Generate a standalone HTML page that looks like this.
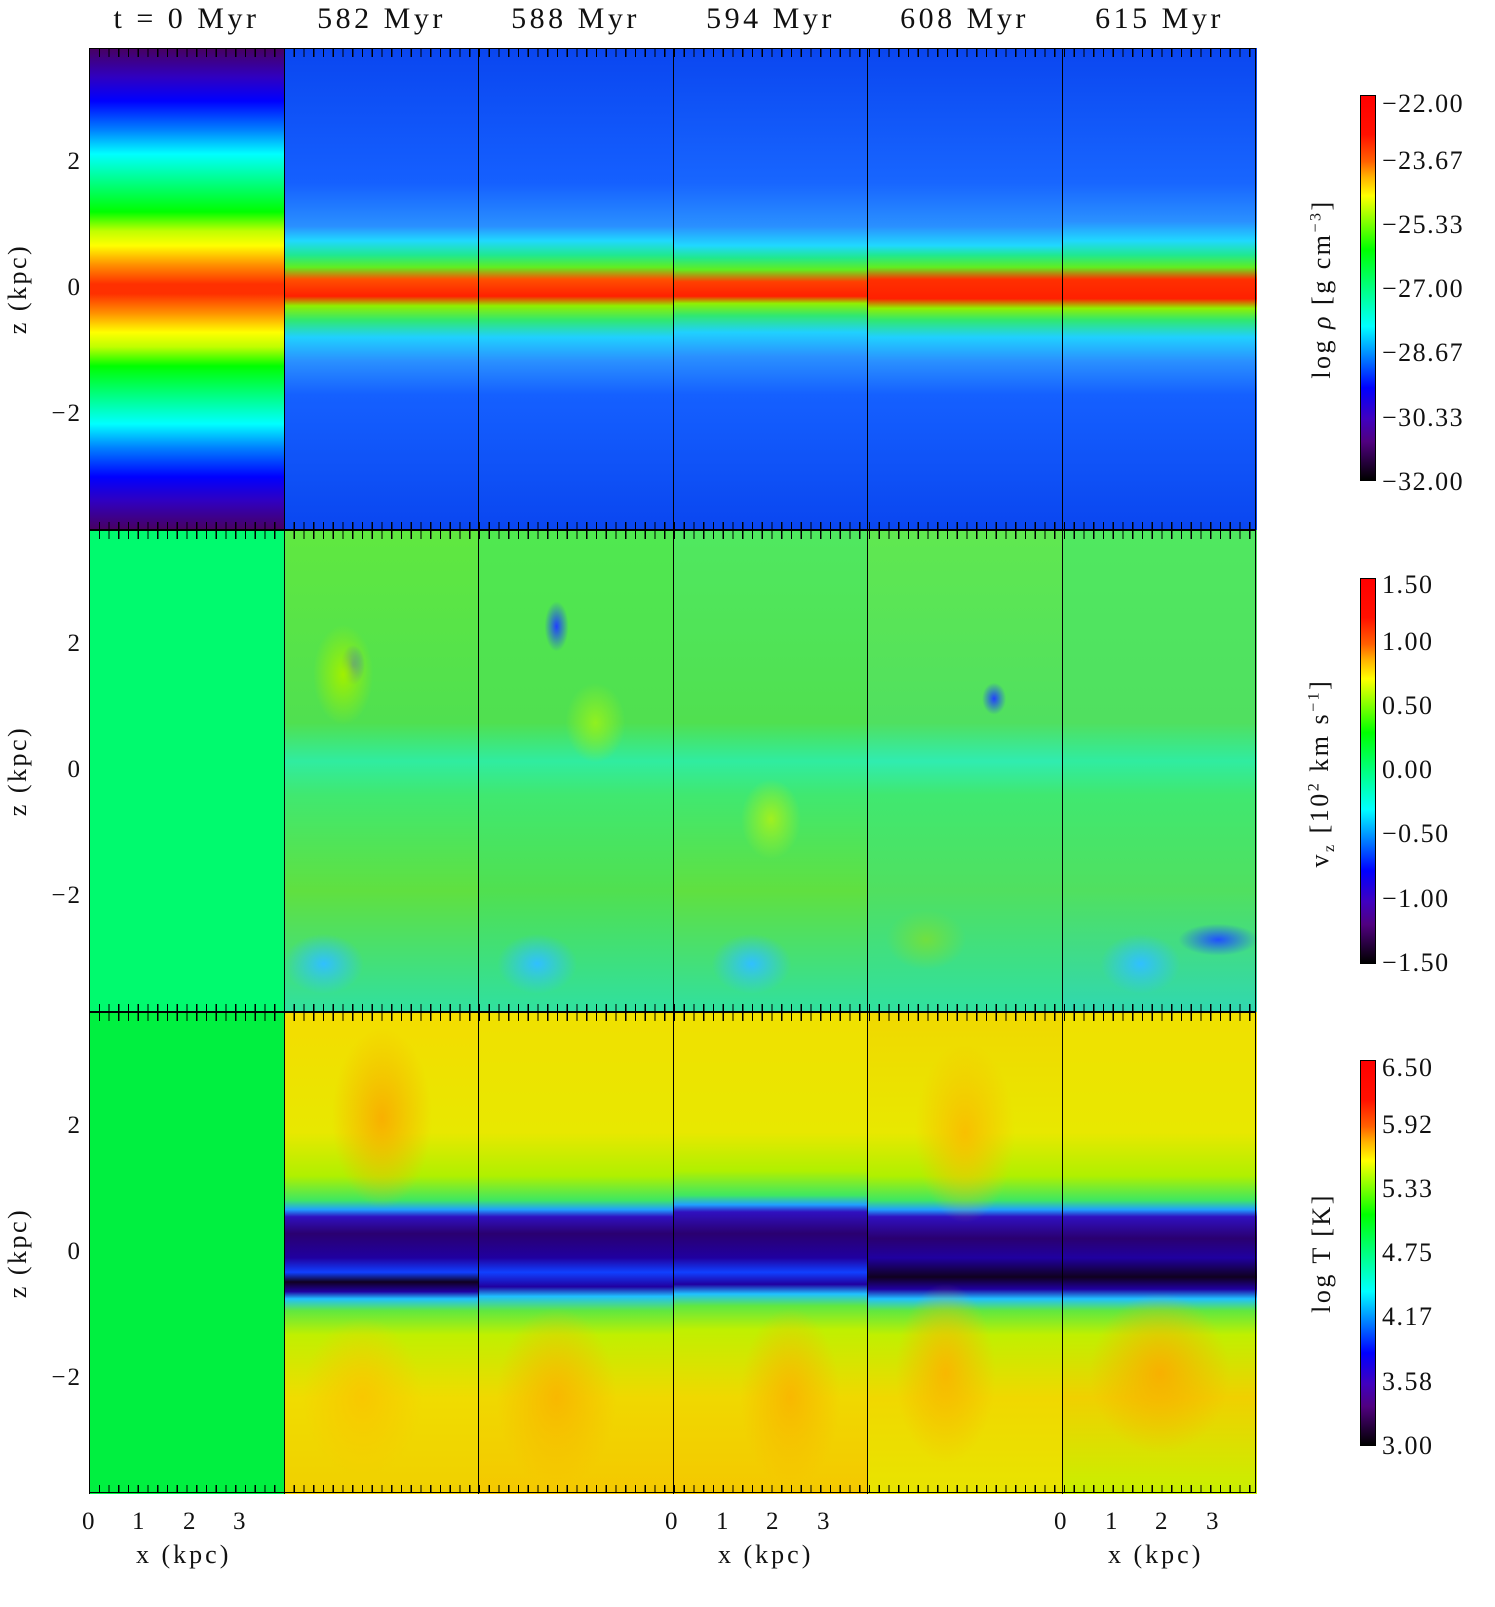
<!DOCTYPE html>
<html><head><meta charset="utf-8"><style>
*{margin:0;padding:0;box-sizing:border-box}
body{width:1495px;height:1607px;background:#fff;position:relative;overflow:hidden;font-family:"Liberation Serif",serif;color:#111}
.p{position:absolute;width:195px;height:482px;border-left:1.5px solid #000}
.t{position:absolute;font-size:30px;top:2px;width:195px;text-align:center;letter-spacing:3.5px;white-space:pre}
.yl{position:absolute;font-size:25px;width:40px;text-align:right;left:42px;letter-spacing:2px}
.cl{position:absolute;font-size:26px;left:1382px;white-space:pre;letter-spacing:1.5px}
.rot{position:absolute;font-size:26px;transform:rotate(-90deg);transform-origin:center;white-space:nowrap;text-align:center;width:320px;letter-spacing:2.5px}
.cb{position:absolute;left:1360px;width:16px;height:386px;border:1.5px solid #000;background:linear-gradient(to bottom,#ff0000 0%,#ff1000 10%,#ff6000 17%,#ffb000 21%,#ffff00 26%,#80ff00 33%,#00ff00 40%,#00ff80 50%,#00ffff 60%,#0080ff 68%,#0000ff 76%,#4000c0 84%,#500080 90%,#000 100%)}
.ticks{position:absolute;left:89px;width:1167px;height:8px;background:repeating-linear-gradient(to right,#000 0 1.2px,transparent 1.2px 9.75px)}
.bx{position:absolute;left:89px;top:48px;width:1167px;height:1445px;border:1.5px solid #000}
.hl{position:absolute;left:89px;width:1167px;height:1.5px;background:#000}
.xl{position:absolute;font-size:25px;top:1508px}
.xt{position:absolute;font-size:26px;top:1540px;letter-spacing:3px}
</style></head><body>

<div class="t" style="left:89px">t = 0 Myr</div>
<div class="t" style="left:284px">582 Myr</div>
<div class="t" style="left:478px">588 Myr</div>
<div class="t" style="left:673px">594 Myr</div>
<div class="t" style="left:867px">608 Myr</div>
<div class="t" style="left:1062px">615 Myr</div>

<!-- row 1 -->
<div class="p" style="left:89px;top:48px;background:linear-gradient(to bottom,#480060 0%,#3000c0 6%,#0000ff 11%,#0080ff 17%,#00ffff 22%,#00ff80 28%,#00ff00 34%,#c0ff00 38%,#ffff00 41%,#ff9000 45%,#ff3000 49%,#ff3000 51%,#ff9000 55%,#ffff00 59%,#c0ff00 62%,#00ff00 66%,#00ff80 72%,#00ffff 78%,#0080ff 83%,#0000ff 89%,#3000c0 94%,#480060 100%)"></div>
<div class="p" style="left:284px;top:48px;background:linear-gradient(to bottom,#0a46f0 0%,#1560ff 28%,#2a90ff 37%,#20d8ff 40%,#20e890 43%,#60ee20 45.5%,#ff5000 48%,#ff2000 51.5%,#90f000 53.5%,#30e870 56.5%,#20d0ff 60%,#2a90ff 65%,#1560ff 72%,#0a46f0 100%)"></div>
<div class="p" style="left:478px;top:48px;background:linear-gradient(to bottom,#0a46f0 0%,#1560ff 28%,#2a90ff 37%,#20d8ff 40%,#20e890 43%,#60ee20 45.5%,#ff5000 48%,#ff2000 51.5%,#90f000 53.5%,#30e870 56.5%,#20d0ff 60%,#2a90ff 65%,#1560ff 72%,#0a46f0 100%)"></div>
<div class="p" style="left:673px;top:48px;background:linear-gradient(to bottom,#0a46f0 0%,#1866ff 28%,#2a90ff 37%,#20d8ff 41%,#20e890 43.5%,#60ee20 46%,#ff4000 48.5%,#ff2000 51.5%,#90f000 53%,#30e870 55.5%,#20d0ff 59%,#2a90ff 64%,#1560ff 72%,#0a46f0 100%)"></div>
<div class="p" style="left:867px;top:48px;background:linear-gradient(to bottom,#0a46f0 0%,#1866ff 28%,#2a90ff 37%,#20d8ff 41%,#20e890 43%,#60ee20 45.5%,#ff3000 48%,#ff2000 52%,#90f000 54%,#30e870 56.5%,#20d0ff 60%,#2a90ff 65%,#1560ff 72%,#0a46f0 100%)"></div>
<div class="p" style="left:1062px;top:48px;background:linear-gradient(to bottom,#0a46f0 0%,#1866ff 28%,#2a90ff 36%,#20d8ff 40%,#20e890 43%,#60ee20 45.5%,#ff3000 48%,#ff2000 52%,#90f000 54%,#30e870 56.5%,#20d0ff 60%,#2a90ff 65%,#1560ff 72%,#0a46f0 100%)"></div>

<!-- row 2 -->
<div class="p" style="left:89px;top:530px;background:#00fa6e"></div>
<div class="p" style="left:284px;top:530px;background:radial-gradient(ellipse 30px 50px at 30% 30%,#a0f000,transparent),radial-gradient(ellipse 12px 20px at 35% 28%,#2050ff,transparent),radial-gradient(ellipse 40px 30px at 20% 90%,#30c0ff,transparent),linear-gradient(to bottom,#60e840 0%,#50e050 40%,#30eca0 48%,#40e870 55%,#60e040 75%,#30e0a0 100%)"></div>
<div class="p" style="left:478px;top:530px;background:radial-gradient(ellipse 12px 25px at 40% 20%,#2040ff,transparent),radial-gradient(ellipse 30px 40px at 60% 40%,#90f020,transparent),radial-gradient(ellipse 40px 30px at 30% 90%,#30c0ff,transparent),linear-gradient(to bottom,#50e850 0%,#50e050 40%,#30eca0 48%,#40e870 55%,#50e050 75%,#30e0a0 100%)"></div>
<div class="p" style="left:673px;top:530px;background:radial-gradient(ellipse 30px 40px at 50% 60%,#a0f020,transparent),radial-gradient(ellipse 40px 30px at 40% 90%,#30c0ff,transparent),linear-gradient(to bottom,#50e860 0%,#50e050 40%,#30eca0 48%,#40e870 55%,#60e040 75%,#30e0a0 100%)"></div>
<div class="p" style="left:867px;top:530px;background:radial-gradient(ellipse 12px 16px at 65% 35%,#2040ff,transparent),radial-gradient(ellipse 40px 30px at 30% 85%,#70e040,transparent),linear-gradient(to bottom,#60e850 0%,#50e060 40%,#30ecb0 48%,#40e870 55%,#50e060 75%,#30e0a0 100%)"></div>
<div class="p" style="left:1062px;top:530px;background:radial-gradient(ellipse 40px 16px at 80% 85%,#2050ff,transparent),radial-gradient(ellipse 40px 30px at 40% 90%,#30c0ff,transparent),linear-gradient(to bottom,#50e860 0%,#50e060 40%,#30eca0 48%,#40e870 55%,#50e060 75%,#30d8b0 100%)"></div>

<!-- row 3 -->
<div class="p" style="left:89px;top:1012px;background:#00f040"></div>
<div class="p" style="left:284px;top:1012px;background:radial-gradient(ellipse 50px 90px at 50% 22%,#f8b000,transparent),radial-gradient(ellipse 60px 80px at 40% 80%,#f8c800,transparent),linear-gradient(to bottom,#f4dc00 0%,#e8e800 25%,#b0f000 34%,#40e860 39%,#20a0ff 41%,#3010c0 42.5%,#2a0070 46%,#2000a0 51%,#1040ff 54%,#100020 56%,#2000a0 58%,#20c0ff 59.5%,#60e840 62%,#c0f000 67%,#f0dc00 80%,#f0d000 100%)"></div>
<div class="p" style="left:478px;top:1012px;background:radial-gradient(ellipse 60px 90px at 40% 80%,#f8b800,transparent),linear-gradient(to bottom,#f0e000 0%,#e8e800 25%,#b0f000 34%,#40e860 39%,#20a0ff 41%,#3010c0 42.5%,#2a0070 46%,#2000a0 51%,#1040ff 54%,#2000a0 57%,#20c0ff 59%,#60e840 62%,#c0f000 67%,#f0d800 80%,#f4c800 100%)"></div>
<div class="p" style="left:673px;top:1012px;background:radial-gradient(ellipse 50px 90px at 60% 80%,#f8b800,transparent),linear-gradient(to bottom,#f0e000 0%,#e8e800 25%,#b0f000 33%,#40e860 38%,#20a0ff 40%,#3010c0 41.5%,#2a0070 46%,#2000a0 51%,#1040ff 54%,#2000a0 56.5%,#20c0ff 58.5%,#60e840 61%,#c0f000 66%,#f0d800 80%,#f4c800 100%)"></div>
<div class="p" style="left:867px;top:1012px;background:radial-gradient(ellipse 50px 90px at 50% 25%,#f8c000,transparent),radial-gradient(ellipse 50px 90px at 40% 75%,#f8b800,transparent),linear-gradient(to bottom,#f0d800 0%,#e8e800 25%,#b0f000 34%,#40e860 39%,#20a0ff 41%,#3010c0 42.5%,#2a0070 47%,#2000a0 51%,#100020 55%,#2000a0 57.5%,#20c0ff 59.5%,#60e840 62%,#c0f000 67%,#f0d800 80%,#e8e400 100%)"></div>
<div class="p" style="left:1062px;top:1012px;background:radial-gradient(ellipse 70px 80px at 50% 75%,#f8b000,transparent),linear-gradient(to bottom,#f0e000 0%,#e8e800 25%,#b0f000 34%,#40e860 39%,#20a0ff 41%,#3010c0 42.5%,#2a0070 47%,#2000a0 51%,#100020 55%,#2000a0 57.5%,#20c0ff 59.5%,#60e840 62%,#c0f000 67%,#f0d000 80%,#c8f000 100%)"></div>

<div class="bx"></div>
<div class="hl" style="top:529px"></div>
<div class="hl" style="top:1011px"></div>
<div class="ticks" style="top:49px"></div>
<div class="ticks" style="top:522px"></div>
<div class="ticks" style="top:531px"></div>
<div class="ticks" style="top:1004px"></div>
<div class="ticks" style="top:1013px"></div>
<div class="ticks" style="top:1485px"></div>

<!-- y labels -->
<div class="yl" style="top:148px">2</div><div class="yl" style="top:274px">0</div><div class="yl" style="top:400px">−2</div>
<div class="yl" style="top:630px">2</div><div class="yl" style="top:756px">0</div><div class="yl" style="top:882px">−2</div>
<div class="yl" style="top:1112px">2</div><div class="yl" style="top:1238px">0</div><div class="yl" style="top:1364px">−2</div>
<div class="rot" style="left:-142px;top:274px">z (kpc)</div>
<div class="rot" style="left:-142px;top:756px">z (kpc)</div>
<div class="rot" style="left:-142px;top:1238px">z (kpc)</div>

<!-- x labels -->
<div class="xl" style="left:82px">0</div><div class="xl" style="left:132px">1</div><div class="xl" style="left:183px">2</div><div class="xl" style="left:233px">3</div>
<div class="xl" style="left:665px">0</div><div class="xl" style="left:716px">1</div><div class="xl" style="left:766px">2</div><div class="xl" style="left:817px">3</div>
<div class="xl" style="left:1054px">0</div><div class="xl" style="left:1105px">1</div><div class="xl" style="left:1155px">2</div><div class="xl" style="left:1206px">3</div>
<div class="xt" style="left:136px">x (kpc)</div>
<div class="xt" style="left:718px">x (kpc)</div>
<div class="xt" style="left:1108px">x (kpc)</div>

<!-- colorbars -->
<div class="cb" style="top:95px"></div>
<div class="cb" style="top:578px"></div>
<div class="cb" style="top:1060px"></div>

<div class="cl" style="top:89px">−22.00</div><div class="cl" style="top:146px">−23.67</div><div class="cl" style="top:210px">−25.33</div><div class="cl" style="top:274px">−27.00</div><div class="cl" style="top:338px">−28.67</div><div class="cl" style="top:403px">−30.33</div><div class="cl" style="top:467px">−32.00</div>
<div class="cl" style="top:570px">1.50</div><div class="cl" style="top:627px">1.00</div><div class="cl" style="top:691px">0.50</div><div class="cl" style="top:755px">0.00</div><div class="cl" style="top:819px">−0.50</div><div class="cl" style="top:884px">−1.00</div><div class="cl" style="top:948px">−1.50</div>
<div class="cl" style="top:1053px">6.50</div><div class="cl" style="top:1110px">5.92</div><div class="cl" style="top:1174px">5.33</div><div class="cl" style="top:1238px">4.75</div><div class="cl" style="top:1302px">4.17</div><div class="cl" style="top:1367px">3.58</div><div class="cl" style="top:1431px">3.00</div>

<div class="rot" style="left:1162px;top:274px">log <i>ρ</i> [g cm<sup style="font-size:16px">−3</sup>]</div>
<div class="rot" style="left:1162px;top:756px">v<sub style="font-size:16px">z</sub> [10<sup style="font-size:16px">2</sup> km s<sup style="font-size:16px">−1</sup>]</div>
<div class="rot" style="left:1162px;top:1238px">log T [K]</div>
</body></html>
